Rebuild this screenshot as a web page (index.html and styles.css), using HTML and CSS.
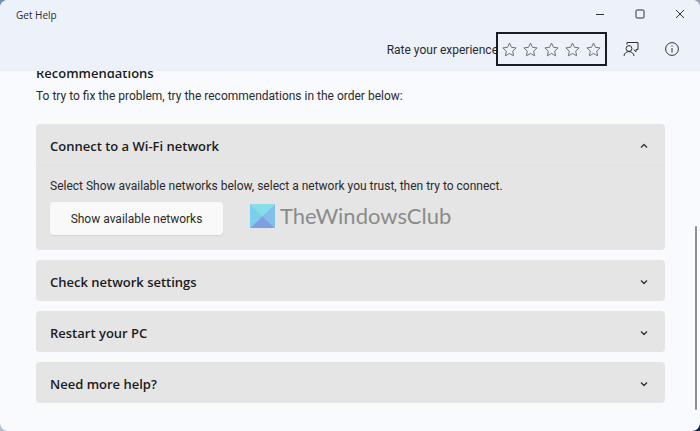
FILE: index.html
```html
<!DOCTYPE html>
<html lang="en">
<head>
    <meta charset="UTF-8">
    <meta name="viewport" content="width=device-width, initial-scale=1.0">
    <title>Get Help</title>
    <link rel="stylesheet" href="styles.css">
</head>
<body>
    <div class="window">
        <header class="header">
            <div class="titlebar">
                <h1 class="app-name">Get Help</h1>
                <div class="window-controls">
                    <button type="button" aria-label="Minimize">
                        <svg width="10" height="10" viewBox="0 0 10 10"><path d="M1 5.500h8"/></svg>
                    </button>
                    <button type="button" aria-label="Maximize">
                        <svg width="10" height="10" viewBox="0 0 10 10"><rect x="1" y="1" width="8" height="8" rx="1"/></svg>
                    </button>
                    <button type="button" aria-label="Close">
                        <svg width="10" height="10" viewBox="0 0 10 10"><path d="M1 1l8 8M9 1l-8 8"/></svg>
                    </button>
                </div>
            </div>
            <div class="toolbar">
                <span class="rate-label" id="rateLabel">Rate your experience</span>
                <div class="stars" role="group" aria-labelledby="rateLabel">
                    <button type="button" aria-label="1 star"><svg width="15" height="15" viewBox="0 0 15 15"><use href="#star"/></svg></button>
                    <button type="button" aria-label="2 stars"><svg width="15" height="15" viewBox="0 0 15 15"><use href="#star"/></svg></button>
                    <button type="button" aria-label="3 stars"><svg width="15" height="15" viewBox="0 0 15 15"><use href="#star"/></svg></button>
                    <button type="button" aria-label="4 stars"><svg width="15" height="15" viewBox="0 0 15 15"><use href="#star"/></svg></button>
                    <button type="button" aria-label="5 stars"><svg width="15" height="15" viewBox="0 0 15 15"><use href="#star"/></svg></button>
                </div>
                <button type="button" class="tool" aria-label="Feedback">
                    <svg width="16" height="16" viewBox="0 0 16 16"><circle cx="6" cy="7.500" r="2.900"/><path d="M1 15c.3-2.800 2.300-4.400 5-4.400s4.700 1.600 5 4.400M4 3.500V1.500h11v7h-2v2.400l-2.400-2.400"/></svg>
                </button>
                <button type="button" class="tool" aria-label="About">
                    <svg width="16" height="16" viewBox="0 0 16 16"><circle cx="8" cy="8" r="6.400"/><path d="M8 7v4.500M8 4.400v1.200"/></svg>
                </button>
            </div>
        </header>

        <main class="content">
            <h2>Recommendations</h2>
            <p class="intro">To try to fix the problem, try the recommendations in the order below:</p>

            <section class="card">
                <button type="button" class="card-header" aria-expanded="true">
                    Connect to a Wi-Fi network
                    <svg width="10" height="10" viewBox="0 0 10 10"><path d="M2 6.500l3-3 3 3"/></svg>
                </button>
                <div class="card-body">
                    <p>Select Show available networks below, select a network you trust, then try to connect.</p>
                    <button type="button" class="action">Show available networks</button>
                    <div class="watermark">
                        <svg width="25" height="24" viewBox="0 0 25 24">
                            <path fill="#86dfe8" d="M0 0h25L12.500 12z"/>
                            <path fill="#78d0ec" d="M0 0l12.500 12L0 24z"/>
                            <path fill="#80c1ec" d="M25 0v24L12.500 12z"/>
                            <path fill="#809fdf" d="M0 24l12.500-12L25 24z"/>
                        </svg>
                        <span>TheWindowsClub</span>
                    </div>
                </div>
            </section>

            <section class="card">
                <button type="button" class="card-header" aria-expanded="false">
                    Check network settings
                    <svg width="10" height="10" viewBox="0 0 10 10"><path d="M2 3.500l3 3 3-3"/></svg>
                </button>
            </section>

            <section class="card">
                <button type="button" class="card-header" aria-expanded="false">
                    Restart your PC
                    <svg width="10" height="10" viewBox="0 0 10 10"><path d="M2 3.500l3 3 3-3"/></svg>
                </button>
            </section>

            <section class="card">
                <button type="button" class="card-header" aria-expanded="false">
                    Need more help?
                    <svg width="10" height="10" viewBox="0 0 10 10"><path d="M2 3.500l3 3 3-3"/></svg>
                </button>
            </section>

            <div class="scroll-thumb"></div>
        </main>
    </div>

    <svg width="0" height="0" class="defs">
        <symbol id="star" viewBox="0 0 15 15">
            <path d="M7.500 1l2 4.300 4.600.6-3.400 3.200.9 4.700-4.100-2.300-4.100 2.300.9-4.700L.9 5.900l4.600-.6z"/>
        </symbol>
    </svg>
</body>
</html>
```

FILE: styles.css
```css
* {
    box-sizing: border-box;
    margin: 0;
    padding: 0;
}

body {
    font-family: Roboto, 'Open Sans', sans-serif;
    font-size: 12px;
    color: #2a2a2c;
    background: linear-gradient(135deg, #6f8fb5 0%, #c5ccd6 50%, #0d2347 100%);
}

button {
    font: inherit;
    color: inherit;
    background: none;
    border: none;
    cursor: pointer;
}

svg {
    display: block;
    fill: none;
    stroke: #2f3135;
    stroke-width: 1;
    stroke-linejoin: round;
}

.defs {
    position: absolute;
}

.window {
    display: flex;
    flex-direction: column;
    min-height: 100vh;
    border-radius: 8px;
    overflow: hidden;
    background: #f8fafe;
}

/* header */
.header {
    background: #edf2fa;
    border-bottom: 1px solid #e9eef5;
}

.titlebar {
    display: flex;
    justify-content: space-between;
    height: 28px;
    padding-left: 16px;
}

.app-name {
    font-family: 'Open Sans', sans-serif;
    font-size: 10px;
    font-weight: 400;
    line-height: 30px;
}

.window-controls {
    display: flex;
}

.window-controls button {
    width: 40px;
    display: flex;
    align-items: center;
    justify-content: center;
}

.toolbar {
    display: flex;
    align-items: center;
    justify-content: flex-end;
    height: 42px;
    padding-right: 8px;
}

.rate-label {
    line-height: 16px;
    padding-top: 2px;
    margin-right: -2px;
    white-space: nowrap;
}

.stars {
    display: flex;
    align-items: center;
    gap: 6px;
    height: 34px;
    padding: 0 4px;
    margin-right: 3px;
    border: 2px solid #1b1c1f;
}

.stars svg {
    stroke: #6d727a;
}

.tool {
    width: 41px;
    height: 34px;
    display: flex;
    align-items: center;
    justify-content: center;
}

/* content, scrolled a little below the header */
.content {
    position: relative;
    flex: 1;
    padding: 0 35px 16px 36px;
    overflow: hidden;
}

h2 {
    margin-top: -8px;
    font-family: 'Open Sans', sans-serif;
    font-size: 13px;
    font-weight: 600;
    line-height: 20px;
    color: #1b1b1d;
}

.intro {
    margin: 5px 0 20px;
    line-height: 16px;
}

.card {
    margin-bottom: 10px;
    border-radius: 4px;
    background: #e5e5e5;
}

.card-header {
    display: flex;
    align-items: center;
    justify-content: space-between;
    width: 100%;
    height: 41px;
    padding: 2px 16px 0 14px;
    font-family: 'Open Sans', sans-serif;
    font-size: 13px;
    font-weight: 600;
    color: #1b1b1d;
    text-align: left;
}

.card-header svg {
    stroke-width: 1.3;
}

.card-body {
    position: relative;
    padding: 12px 14px 15px;
    border-top: 1px solid #e1e1e1;
}

.card-body p {
    line-height: 16px;
    margin-bottom: 8px;
}

.action {
    width: 173px;
    height: 33px;
    border-radius: 4px;
    background: #f9f9f9;
    box-shadow: 0 1px 1px #d2d2d2;
}

.watermark {
    position: absolute;
    left: 214px;
    top: 38px;
    display: flex;
    align-items: center;
    gap: 5px;
    font-family: Lato, sans-serif;
    font-size: 22px;
    line-height: 24px;
    color: #8b8b8b;
}

.watermark svg {
    stroke: none;
}

.scroll-thumb {
    position: absolute;
    right: 3px;
    top: 155px;
    bottom: 21px;
    width: 2px;
    border-radius: 1px;
    background: #8d8f96;
}
```
